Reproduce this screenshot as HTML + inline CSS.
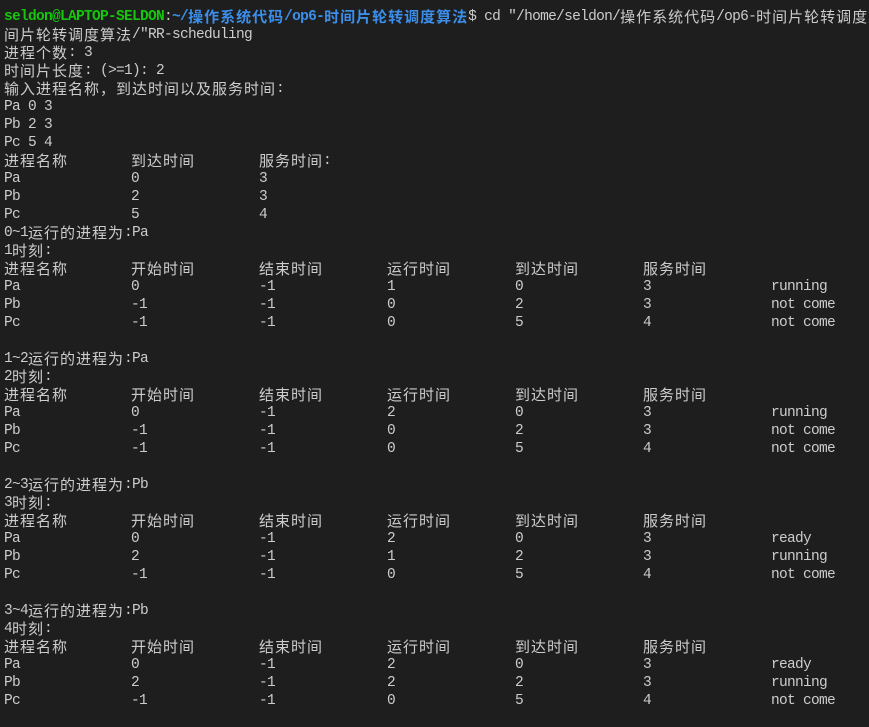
<!DOCTYPE html>
<html><head><meta charset="utf-8"><style>
html,body{margin:0;padding:0;background:#1e1e1e;width:869px;height:727px;overflow:hidden}
body{position:relative;font-family:"Liberation Mono","Noto Sans CJK SC",monospace;font-size:14.5px;letter-spacing:-0.7px;color:#cccccc}
.l{position:absolute;left:4px;height:18px;line-height:18px;white-space:pre;width:1000px}
.l span.k{position:absolute;top:0}
.c{font-family:"Noto Sans CJK SC",sans-serif;font-size:15px;letter-spacing:1px;line-height:18px;vertical-align:top}
.g{color:#16c60c;font-weight:bold}
.b{color:#3b8eea;font-weight:bold}
</style></head><body>
<div class="l" style="top:8px"><span class="g">seldon@LAPTOP-SELDON</span>:<span class="b">~/<span class="c">操作系统代码</span>/op6-<span class="c">时间片轮转调度算法</span></span>$ cd "/home/seldon/<span class="c">操作系统代码</span>/op6-<span class="c">时间片轮转调度算</span></div>
<div class="l" style="top:26px"><span class="c">间片轮转调度算法</span>/"RR-scheduling</div>
<div class="l" style="top:44px"><span class="c">进程个数</span>: 3</div>
<div class="l" style="top:62px"><span class="c">时间片长度</span>: (&gt;=1): 2</div>
<div class="l" style="top:80px"><span class="c">输入进程名称，到达时间以及服务时间</span>:</div>
<div class="l" style="top:98px">Pa 0 3</div>
<div class="l" style="top:116px">Pb 2 3</div>
<div class="l" style="top:134px">Pc 5 4</div>
<div class="l" style="top:152px"><span class="k c" style="left:0">进程名称</span><span class="k c" style="left:127px">到达时间</span><span class="k" style="left:255px"><span class="c">服务时间</span>:</span></div>
<div class="l" style="top:170px"><span class="k" style="left:0">Pa</span><span class="k" style="left:127px">0</span><span class="k" style="left:255px">3</span></div>
<div class="l" style="top:188px"><span class="k" style="left:0">Pb</span><span class="k" style="left:127px">2</span><span class="k" style="left:255px">3</span></div>
<div class="l" style="top:206px"><span class="k" style="left:0">Pc</span><span class="k" style="left:127px">5</span><span class="k" style="left:255px">4</span></div>

<div class="l" style="top:224px">0~1<span class="c">运行的进程为</span>:Pa</div>
<div class="l" style="top:242px">1<span class="c">时刻</span>:</div>
<div class="l" style="top:260px"><span class="k c" style="left:0">进程名称</span><span class="k c" style="left:127px">开始时间</span><span class="k c" style="left:255px">结束时间</span><span class="k c" style="left:383px">运行时间</span><span class="k c" style="left:511px">到达时间</span><span class="k c" style="left:639px">服务时间</span></div>
<div class="l" style="top:278px"><span class="k" style="left:0">Pa</span><span class="k" style="left:127px">0</span><span class="k" style="left:255px">-1</span><span class="k" style="left:383px">1</span><span class="k" style="left:511px">0</span><span class="k" style="left:639px">3</span><span class="k" style="left:767px">running</span></div>
<div class="l" style="top:296px"><span class="k" style="left:0">Pb</span><span class="k" style="left:127px">-1</span><span class="k" style="left:255px">-1</span><span class="k" style="left:383px">0</span><span class="k" style="left:511px">2</span><span class="k" style="left:639px">3</span><span class="k" style="left:767px">not come</span></div>
<div class="l" style="top:314px"><span class="k" style="left:0">Pc</span><span class="k" style="left:127px">-1</span><span class="k" style="left:255px">-1</span><span class="k" style="left:383px">0</span><span class="k" style="left:511px">5</span><span class="k" style="left:639px">4</span><span class="k" style="left:767px">not come</span></div>

<div class="l" style="top:350px">1~2<span class="c">运行的进程为</span>:Pa</div>
<div class="l" style="top:368px">2<span class="c">时刻</span>:</div>
<div class="l" style="top:386px"><span class="k c" style="left:0">进程名称</span><span class="k c" style="left:127px">开始时间</span><span class="k c" style="left:255px">结束时间</span><span class="k c" style="left:383px">运行时间</span><span class="k c" style="left:511px">到达时间</span><span class="k c" style="left:639px">服务时间</span></div>
<div class="l" style="top:404px"><span class="k" style="left:0">Pa</span><span class="k" style="left:127px">0</span><span class="k" style="left:255px">-1</span><span class="k" style="left:383px">2</span><span class="k" style="left:511px">0</span><span class="k" style="left:639px">3</span><span class="k" style="left:767px">running</span></div>
<div class="l" style="top:422px"><span class="k" style="left:0">Pb</span><span class="k" style="left:127px">-1</span><span class="k" style="left:255px">-1</span><span class="k" style="left:383px">0</span><span class="k" style="left:511px">2</span><span class="k" style="left:639px">3</span><span class="k" style="left:767px">not come</span></div>
<div class="l" style="top:440px"><span class="k" style="left:0">Pc</span><span class="k" style="left:127px">-1</span><span class="k" style="left:255px">-1</span><span class="k" style="left:383px">0</span><span class="k" style="left:511px">5</span><span class="k" style="left:639px">4</span><span class="k" style="left:767px">not come</span></div>

<div class="l" style="top:476px">2~3<span class="c">运行的进程为</span>:Pb</div>
<div class="l" style="top:494px">3<span class="c">时刻</span>:</div>
<div class="l" style="top:512px"><span class="k c" style="left:0">进程名称</span><span class="k c" style="left:127px">开始时间</span><span class="k c" style="left:255px">结束时间</span><span class="k c" style="left:383px">运行时间</span><span class="k c" style="left:511px">到达时间</span><span class="k c" style="left:639px">服务时间</span></div>
<div class="l" style="top:530px"><span class="k" style="left:0">Pa</span><span class="k" style="left:127px">0</span><span class="k" style="left:255px">-1</span><span class="k" style="left:383px">2</span><span class="k" style="left:511px">0</span><span class="k" style="left:639px">3</span><span class="k" style="left:767px">ready</span></div>
<div class="l" style="top:548px"><span class="k" style="left:0">Pb</span><span class="k" style="left:127px">2</span><span class="k" style="left:255px">-1</span><span class="k" style="left:383px">1</span><span class="k" style="left:511px">2</span><span class="k" style="left:639px">3</span><span class="k" style="left:767px">running</span></div>
<div class="l" style="top:566px"><span class="k" style="left:0">Pc</span><span class="k" style="left:127px">-1</span><span class="k" style="left:255px">-1</span><span class="k" style="left:383px">0</span><span class="k" style="left:511px">5</span><span class="k" style="left:639px">4</span><span class="k" style="left:767px">not come</span></div>

<div class="l" style="top:602px">3~4<span class="c">运行的进程为</span>:Pb</div>
<div class="l" style="top:620px">4<span class="c">时刻</span>:</div>
<div class="l" style="top:638px"><span class="k c" style="left:0">进程名称</span><span class="k c" style="left:127px">开始时间</span><span class="k c" style="left:255px">结束时间</span><span class="k c" style="left:383px">运行时间</span><span class="k c" style="left:511px">到达时间</span><span class="k c" style="left:639px">服务时间</span></div>
<div class="l" style="top:656px"><span class="k" style="left:0">Pa</span><span class="k" style="left:127px">0</span><span class="k" style="left:255px">-1</span><span class="k" style="left:383px">2</span><span class="k" style="left:511px">0</span><span class="k" style="left:639px">3</span><span class="k" style="left:767px">ready</span></div>
<div class="l" style="top:674px"><span class="k" style="left:0">Pb</span><span class="k" style="left:127px">2</span><span class="k" style="left:255px">-1</span><span class="k" style="left:383px">2</span><span class="k" style="left:511px">2</span><span class="k" style="left:639px">3</span><span class="k" style="left:767px">running</span></div>
<div class="l" style="top:692px"><span class="k" style="left:0">Pc</span><span class="k" style="left:127px">-1</span><span class="k" style="left:255px">-1</span><span class="k" style="left:383px">0</span><span class="k" style="left:511px">5</span><span class="k" style="left:639px">4</span><span class="k" style="left:767px">not come</span></div>
</body></html>
